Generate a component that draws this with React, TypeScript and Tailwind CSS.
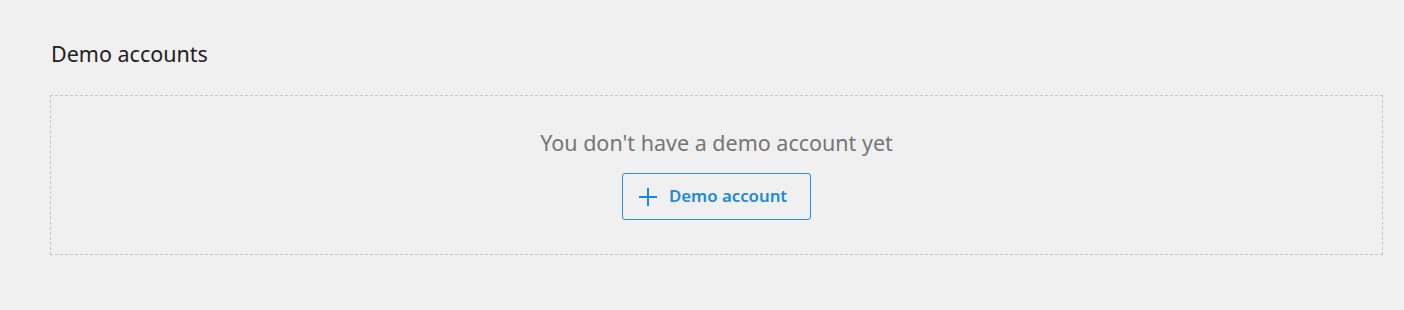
export default function App() {
  return (
    <div
      className="min-h-[310px] w-full bg-[#f0f0f0] pt-[40px] pl-[50px] pr-[21px]"
      style={{ fontFamily: '"Noto Sans", "Open Sans", sans-serif' }}
    >
      <h2 className="text-[21.5px] leading-[28px] text-[#222222] pl-px">Demo accounts</h2>

      <div className="mt-[27px] flex flex-col items-center border border-dashed border-[#c6c6c6] pt-[33px] pb-[34px]">
        <p className="text-[21.5px] leading-[28px] text-[#767676]">You don't have a demo account yet</p>
        <button
          type="button"
          className="mt-[16px] flex h-[47px] w-[189px] items-center rounded-[3px] border border-[#2a8fd8] pl-[15px] text-[#1e88d6]"
        >
          <svg width="20" height="20" viewBox="0 0 20 20" fill="none" stroke="currentColor" strokeWidth="2">
            <path d="M10 1v18M1 10h18" />
          </svg>
          <span className="ml-[11px] text-[16.8px] font-semibold leading-none">Demo account</span>
        </button>
      </div>
    </div>
  );
}
